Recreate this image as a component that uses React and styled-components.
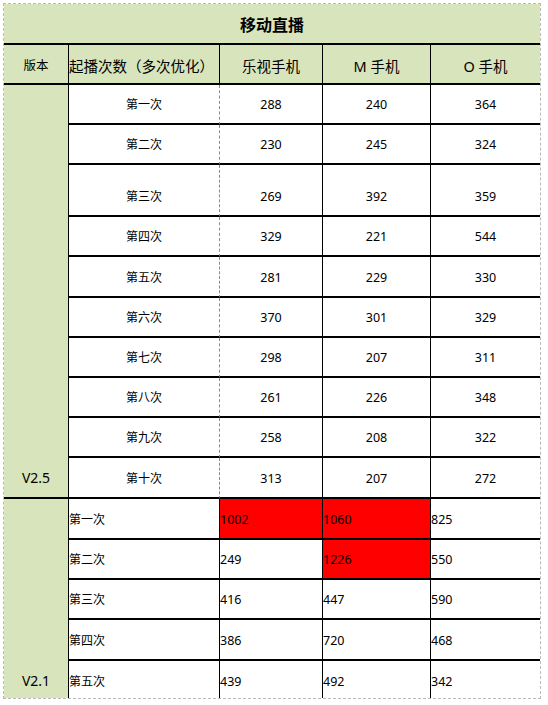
import React from 'react';
import styled, { createGlobalStyle } from 'styled-components';

const GREEN = '#d8e4bc';
const RULE = '2px solid #000';

const GlobalStyle = createGlobalStyle`
  html, body { margin: 0; padding: 0; background: #fff; }
  body {
    font-family: "Noto Sans", "Noto Sans CJK SC", sans-serif;
    color: #000;
  }
`;

const Sheet = styled.div`
  display: grid;
  grid-template-columns: 64px 151px 103px 108px 110px;
  grid-template-rows: 41px 40px 40px 40px 52px 40px 41px 40px 40px 40px 40px 41px 41px 40px 40px 41px 37px;
  width: 536px;
  margin: 3px 0 0 3px;
  border: 1px dashed #b9b9b9;
`;

const Cell = styled.div`
  box-sizing: border-box;
  display: flex;
  align-items: flex-end;
  min-width: 0;
  overflow: hidden;
  white-space: nowrap;
`;

const TitleCell = styled(Cell)`
  grid-column: 1 / -1;
  justify-content: center;
  background: ${GREEN};
  border-bottom: ${RULE};
  padding-bottom: 8px;
  font-size: 16px;
  line-height: 20px;
  font-weight: 700;
`;

const HeadCell = styled(Cell)`
  justify-content: ${(p) => (p.$left ? 'flex-start' : 'center')};
  background: ${GREEN};
  border-bottom: ${RULE};
  border-left: ${(p) => (p.$first ? 'none' : '1px solid #000')};
  padding-bottom: 7px;
  font-size: ${(p) => p.$size || '14.5px'};
  line-height: 20px;
`;

const VersionCell = styled(Cell)`
  grid-column: 1;
  grid-row: span ${(p) => p.$span};
  justify-content: center;
  background: ${GREEN};
  border-bottom: ${(p) => (p.$last ? 'none' : RULE)};
  padding-bottom: ${(p) => (p.$last ? '8px' : '10px')};
  font-size: 14px;
  line-height: 18px;
`;

const DataCell = styled(Cell)`
  justify-content: ${(p) => (p.$left ? 'flex-start' : 'center')};
  background: ${(p) => (p.$red ? '#ff0000' : '#fff')};
  border-left: ${(p) => (p.$dashed ? '1px dashed #8a8a8a' : '1px solid #000')};
  border-bottom: ${(p) => (p.$last ? 'none' : RULE)};
  padding-bottom: ${(p) => (p.$last ? '8px' : '10px')};
  font-size: ${(p) => (p.$num ? '12.5px' : '12px')};
  line-height: 17px;
`;

const v25 = [
  ['第一次', 288, 240, 364],
  ['第二次', 230, 245, 324],
  ['第三次', 269, 392, 359],
  ['第四次', 329, 221, 544],
  ['第五次', 281, 229, 330],
  ['第六次', 370, 301, 329],
  ['第七次', 298, 207, 311],
  ['第八次', 261, 226, 348],
  ['第九次', 258, 208, 322],
  ['第十次', 313, 207, 272],
];

const v21 = [
  { label: '第一次', values: [1002, 1060, 825], red: [true, true, false] },
  { label: '第二次', values: [249, 1226, 550], red: [false, true, false] },
  { label: '第三次', values: [416, 447, 590], red: [false, false, false] },
  { label: '第四次', values: [386, 720, 468], red: [false, false, false] },
  { label: '第五次', values: [439, 492, 342], red: [false, false, false] },
];

export default function App() {
  return (
    <>
      <GlobalStyle />
      <Sheet>
        <TitleCell>移动直播</TitleCell>

        <HeadCell $first $size="12.5px">版本</HeadCell>
        <HeadCell $left>起播次数（多次优化）</HeadCell>
        <HeadCell>乐视手机</HeadCell>
        <HeadCell>M 手机</HeadCell>
        <HeadCell>O 手机</HeadCell>

        <VersionCell $span={v25.length}>V2.5</VersionCell>
        {v25.map(([label, a, b, c]) => (
          <React.Fragment key={'a' + label}>
            <DataCell>{label}</DataCell>
            <DataCell $num $dashed>{a}</DataCell>
            <DataCell $num>{b}</DataCell>
            <DataCell $num>{c}</DataCell>
          </React.Fragment>
        ))}

        <VersionCell $span={v21.length} $last>V2.1</VersionCell>
        {v21.map((row, i) => {
          const last = i === v21.length - 1;
          return (
            <React.Fragment key={'b' + row.label}>
              <DataCell $left $last={last}>{row.label}</DataCell>
              {row.values.map((v, j) => (
                <DataCell key={j} $num $left $last={last} $red={row.red[j]}>
                  {v}
                </DataCell>
              ))}
            </React.Fragment>
          );
        })}
      </Sheet>
    </>
  );
}
